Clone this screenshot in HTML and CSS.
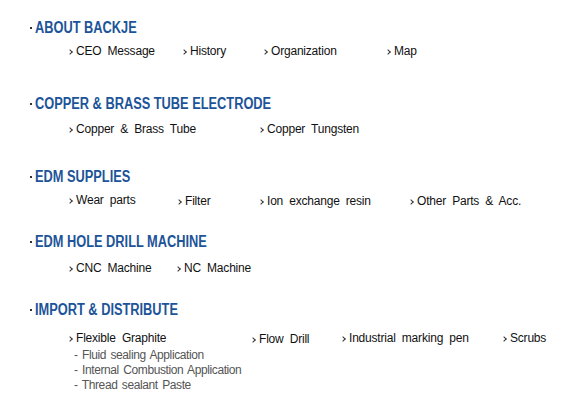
FILE: index.html
```html
<!DOCTYPE html>
<html>
<head>
<meta charset="utf-8">
<link rel="stylesheet" href="styles.css">
</head>
<body>
<div class="menu">
  <section class="sec s1">
    <h2 class="head"><span class="dot"></span><span class="htxt">ABOUT BACKJE</span></h2>
    <div class="row r1">
      <span class="item w114"><i class="chev"></i>CEO Message</span>
      <span class="item w81"><i class="chev"></i>History</span>
      <span class="item w123"><i class="chev"></i>Organization</span>
      <span class="item"><i class="chev"></i>Map</span>
    </div>
  </section>
  <section class="sec s2">
    <h2 class="head"><span class="dot"></span><span class="htxt">COPPER &amp; BRASS TUBE ELECTRODE</span></h2>
    <div class="row r2">
      <span class="item w191"><i class="chev"></i>Copper &amp; Brass Tube</span>
      <span class="item"><i class="chev"></i>Copper Tungsten</span>
    </div>
  </section>
  <section class="sec s3">
    <h2 class="head"><span class="dot"></span><span class="htxt">EDM SUPPLIES</span></h2>
    <div class="row r3">
      <span class="item w109"><i class="chev"></i>Wear parts</span>
      <span class="item w82 low"><i class="chev"></i>Filter</span>
      <span class="item w150 low"><i class="chev"></i>Ion exchange resin</span>
      <span class="item low"><i class="chev"></i>Other Parts &amp; Acc.</span>
    </div>
  </section>
  <section class="sec s4">
    <h2 class="head"><span class="dot"></span><span class="htxt">EDM HOLE DRILL MACHINE</span></h2>
    <div class="row r4">
      <span class="item w108"><i class="chev"></i>CNC Machine</span>
      <span class="item"><i class="chev"></i>NC Machine</span>
    </div>
  </section>
  <section class="sec s5">
    <h2 class="head"><span class="dot"></span><span class="htxt">IMPORT &amp; DISTRIBUTE</span></h2>
    <div class="row r5">
      <div class="item w183 col">
        <span><i class="chev"></i>Flexible Graphite</span>
        <ul class="subs">
          <li>- Fluid sealing Application</li>
          <li>- Internal Combustion Application</li>
          <li>- Thread sealant Paste</li>
        </ul>
      </div>
      <span class="item w90 low"><i class="chev"></i>Flow Drill</span>
      <span class="item w161"><i class="chev"></i>Industrial marking pen</span>
      <span class="item"><i class="chev"></i>Scrubs</span>
    </div>
  </section>
</div>
</body>
</html>
```

FILE: styles.css
```css
html, body {
  margin: 0;
  padding: 0;
  background: #ffffff;
}
.menu {
  width: 562px;
  height: 407px;
  padding-top: 18px;
  box-sizing: border-box;
  font-family: "Liberation Sans", Arial, sans-serif;
}
.head {
  margin: 0;
  height: 20px;
  line-height: 20px;
  display: flex;
  align-items: center;
  padding-left: 30px;
  font-family: "Liberation Sans", Arial, sans-serif;
  font-weight: bold;
  font-size: 16px;
  color: #1d5499;
}
.htxt {
  display: inline-block;
  white-space: nowrap;
  transform: scaleX(0.8);
  transform-origin: left center;
}
.dot {
  width: 2px;
  height: 2px;
  background: #333;
  margin-right: 3px;
}
.row {
  display: flex;
  align-items: flex-start;
  padding-left: 68px;
  font-size: 12px;
  line-height: 20px;
  color: #111;
  word-spacing: 3px;
  letter-spacing: -0.2px;
}
.item {
  display: flex;
  align-items: center;
  white-space: nowrap;
}
.item.low {
  position: relative;
  top: 1px;
}
.item.col {
  flex-direction: column;
  align-items: flex-start;
}
.item.col > span {
  display: flex;
  align-items: center;
  height: 20px;
}
.chev {
  display: inline-block;
  width: 3px;
  height: 3px;
  border-right: 1px solid #333;
  border-top: 1px solid #333;
  transform: rotate(45deg);
  margin: 1px 4px 0 0;
}
.w81 { width: 81px; }
.w82 { width: 82px; }
.w90 { width: 90px; }
.w108 { width: 108px; }
.w109 { width: 109px; }
.w114 { width: 114px; }
.w123 { width: 123px; }
.w150 { width: 150px; }
.w161 { width: 161px; }
.w183 { width: 183px; }
.w191 { width: 191px; }
.r1 { margin-top: 3px; }
.s2 { margin-top: 33px; }
.r2 { margin-top: 5px; }
.s3 { margin-top: 28px; }
.r3 { margin-top: 3px; }
.s4 { margin-top: 22px; }
.r4 { margin-top: 6px; }
.s5 { margin-top: 22px; }
.r5 { margin-top: 8px; }
.subs {
  list-style: none;
  margin: 0;
  padding: 0 0 0 6px;
  font-size: 12px;
  line-height: 15px;
  color: #555;
  letter-spacing: -0.4px;
  word-spacing: 1.5px;
}
```
